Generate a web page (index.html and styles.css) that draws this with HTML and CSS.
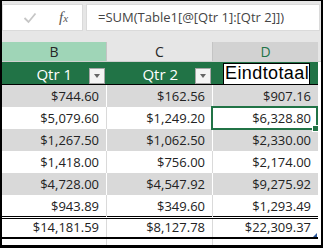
FILE: index.html
```html
<!DOCTYPE html>
<html lang="en">
<head>
    <meta charset="UTF-8">
    <title>Eindtotaal</title>
    <link rel="stylesheet" href="styles.css">
</head>
<body>
    <div class="frame">
        <div class="formula-bar">
            <div class="fb-buttons">
                <svg class="fb-check" width="14" height="12" viewBox="0 0 14 12">
                    <polyline points="1.5,6 5.5,10 12.5,1.5" fill="none" stroke="#c6c6c6" stroke-width="1.8"/>
                </svg>
                <span class="fb-fx"><i>f</i><i class="x">x</i></span>
            </div>
            <div class="fb-input">=SUM(Table1[@[Qtr 1]:[Qtr 2]])</div>
        </div>

        <div class="sheet">
            <div class="col-heads">
                <div class="ch ch-sel">B</div>
                <div class="ch">C</div>
                <div class="ch ch-active">D</div>
            </div>

            <div class="table">
                <div class="row thead">
                    <div class="cell"><span>Qtr 1</span><span class="dd"></span></div>
                    <div class="cell"><span>Qtr 2</span><span class="dd"></span></div>
                    <div class="cell edit"><span class="edit-box">Eindtotaal</span></div>
                </div>

                <div class="row band">
                    <div class="cell">$744.60</div>
                    <div class="cell">$162.56</div>
                    <div class="cell">$907.16</div>
                </div>
                <div class="row">
                    <div class="cell">$5,079.60</div>
                    <div class="cell">$1,249.20</div>
                    <div class="cell active">$6,328.80</div>
                </div>
                <div class="row band">
                    <div class="cell">$1,267.50</div>
                    <div class="cell">$1,062.50</div>
                    <div class="cell">$2,330.00</div>
                </div>
                <div class="row">
                    <div class="cell">$1,418.00</div>
                    <div class="cell">$756.00</div>
                    <div class="cell">$2,174.00</div>
                </div>
                <div class="row band">
                    <div class="cell">$4,728.00</div>
                    <div class="cell">$4,547.92</div>
                    <div class="cell">$9,275.92</div>
                </div>
                <div class="row last">
                    <div class="cell">$943.89</div>
                    <div class="cell">$349.60</div>
                    <div class="cell">$1,293.49</div>
                </div>

                <div class="row total">
                    <div class="cell">$14,181.59</div>
                    <div class="cell">$8,127.78</div>
                    <div class="cell resize">$22,309.37</div>
                </div>
                <div class="row blank">
                    <div class="cell"></div>
                    <div class="cell"></div>
                    <div class="cell"></div>
                </div>
            </div>
        </div>
    </div>
</body>
</html>
```

FILE: styles.css
```css
body {
    margin: 0;
}
.frame {
    width: 323px;
    height: 248px;
    box-sizing: border-box;
    border: solid #000;
    border-width: 1px 2px 3px 2px;
    background: #e6e6e6;
    font-family: "Open Sans", sans-serif;
    overflow: hidden;
}

/* formula bar */
.formula-bar {
    height: 41px;
    box-sizing: border-box;
    padding: 3px 1px 0 0;
    display: flex;
    gap: 3px;
}
.fb-buttons, .fb-input {
    height: 27px;
    box-sizing: border-box;
    background: #fff;
    border: 1px solid #dadada;
}
.fb-buttons {
    width: 81px;
    display: flex;
    align-items: center;
    padding-left: 20px;
}
.fb-check {
    margin-top: 1px;
}
.fb-fx {
    margin-left: 22px;
    font-family: "Liberation Serif", serif;
    color: #555;
    font-size: 15px;
}
.fb-fx .x {
    font-size: 11px;
}
.fb-input {
    flex: 1;
    padding-left: 11px;
    font-size: 13px;
    line-height: 25px;
    color: #444;
}

/* sheet */
.sheet {
    background: #fff;
}
.col-heads {
    display: grid;
    grid-template-columns: 105px 106px 105px;
    height: 19px;
    border-bottom: 1px solid #cfcfcf;
    background: #e6e6e6;
}
.ch {
    border-right: 1px solid #c4c4c4;
    text-align: center;
    font-size: 14px;
    line-height: 19px;
    color: #262626;
}
.ch-sel {
    background: #9fd5b7;
}
.ch-active {
    background: #d2d2d2;
    color: #217346;
    border-right: none;
}

.table {
    width: 316px;
}
.row {
    display: grid;
    grid-template-columns: 105px 106px 105px;
    height: 22px;
}
.cell {
    box-sizing: border-box;
    border-right: 1px solid #dadada;
    padding: 1px 7px 0 0;
    text-align: right;
    font-size: 13px;
    line-height: 21px;
    color: #222;
}
.cell:last-child {
    border-right: none;
}
.band {
    background: #d9d9d9;
}
.band .cell {
    border-right-color: #fff;
}
.last {
    height: 21px;
}

/* table header */
.thead {
    height: 23px;
    background: #217346;
    border-bottom: 1px solid #000;
    box-sizing: border-box;
}
.thead .cell {
    display: flex;
    justify-content: flex-end;
    align-items: flex-end;
    padding: 0 1px 0 0;
    border-right: 1px solid #217346;
    color: #fff;
    font-size: 15px;
}
.thead .cell span:first-child {
    line-height: 19px;
    margin-right: 17px;
}
.dd {
    width: 16px;
    height: 16px;
    box-sizing: border-box;
    background: #f4f4f4;
    border: 1px solid #a6a6a6;
    display: flex;
    align-items: center;
    justify-content: center;
}
.dd::after {
    content: "";
    border-left: 3px solid transparent;
    border-right: 3px solid transparent;
    border-top: 4px solid #666;
}
.thead .edit {
    padding: 1px 0 0 10px;
    justify-content: flex-start;
}
.edit-box {
    flex: 1;
    height: 21px;
    box-sizing: border-box;
    background: #fff;
    border: 1px solid #000;
    border-bottom: none;
    color: #000;
    font-family: "Liberation Sans", sans-serif;
    font-size: 18px;
    letter-spacing: 0.4px;
    line-height: 22px;
    padding-left: 1px;
    white-space: nowrap;
}

/* active cell */
.active {
    position: relative;
    z-index: 1;
}
.active::after {
    content: "";
    position: absolute;
    top: -1px;
    left: -2px;
    right: 0;
    bottom: -1px;
    border: 2px solid #217346;
}
.active::before {
    content: "";
    position: absolute;
    right: -1px;
    bottom: -3px;
    width: 5px;
    height: 5px;
    background: #217346;
    border: 1px solid #fff;
    z-index: 2;
}

/* total row */
.total {
    height: 23px;
    box-sizing: border-box;
    border-top: 3px double #000;
    border-bottom: 2px solid #000;
}
.total .cell {
    line-height: 17px;
    padding-top: 0;
}
.resize {
    position: relative;
}
.resize::after {
    content: "";
    position: absolute;
    right: 1px;
    bottom: 0;
    border-left: 4px solid transparent;
    border-bottom: 4px solid #2b579a;
}
.blank {
    height: 6px;
}
```
